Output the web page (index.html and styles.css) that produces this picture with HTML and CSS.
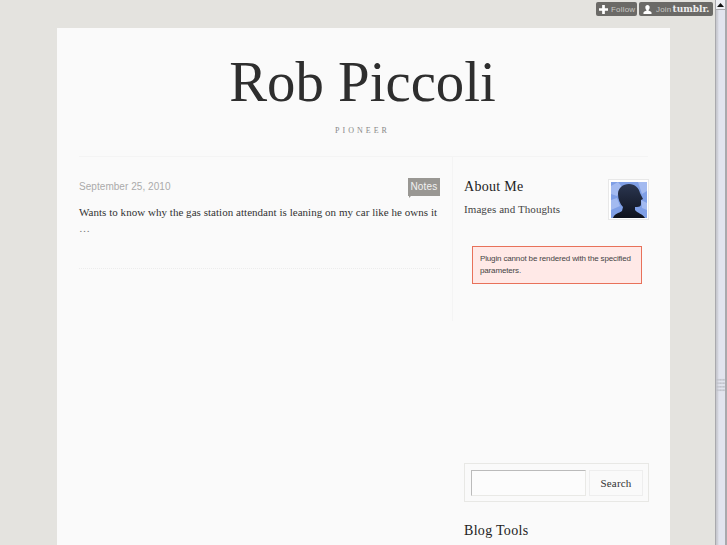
FILE: index.html
```html
<!DOCTYPE html>
<html lang="en">
<head>
<meta charset="utf-8">
<title>Rob Piccoli</title>
<link rel="stylesheet" href="styles.css">
</head>
<body>
<div class="viewport">
  <div class="page">
    <div class="controls">
      <a class="ctl ctl-follow">
        <svg class="ctl-icon" viewBox="0 0 10 10"><path d="M3.500 0h3v3.500H10v3H6.500V10h-3V6.500H0v-3h3.500z"/></svg>
        <span>Follow</span>
      </a>
      <a class="ctl ctl-join">
        <svg class="ctl-icon" viewBox="0 0 10 10"><path d="M5 0c1.500 0 2.400 1 2.400 2.600C7.400 4.200 6.800 5.200 6.200 5.600v.7c1.500.4 3.300 1 3.300 2.200V10H.5V8.500c0-1.200 1.800-1.800 3.300-2.200v-.7C3.200 5.200 2.600 4.200 2.600 2.600 2.600 1 3.500 0 5 0z"/></svg>
        <span>Join</span><b class="ctl-brand">tumblr.</b>
      </a>
    </div>
    <div class="card">
      <header class="head">
        <h1 class="title">Rob Piccoli</h1>
        <p class="tagline">PIONEER</p>
      </header>
      <div class="cols">
        <main class="posts">
          <article class="post">
            <div class="post-meta">
              <span class="date">September 25, 2010</span>
              <a class="notes">Notes</a>
            </div>
            <p class="post-text">Wants to know why the gas station attendant is leaning on my car like he owns it</p>
            <p class="ellipsis">…</p>
          </article>
        </main>
        <aside class="side">
          <div class="about">
            <div class="about-text">
              <h2 class="side-title">About Me</h2>
              <p class="about-sub">Images and Thoughts</p>
            </div>
            <div class="avatar">
              <svg viewBox="0 0 36 36" width="36" height="36">
                <defs>
                  <linearGradient id="sil" x1="0" y1="0" x2="0" y2="1">
                    <stop offset="0" stop-color="#2b3650"/>
                    <stop offset="1" stop-color="#0e121d"/>
                  </linearGradient>
                </defs>
                <rect width="36" height="36" fill="#7f9fe6"/>
                <path d="M0 4l7-4 5 6-6 8-6-2zM0 18l6-2 3 8-9 4zM27 0h9v9l-5 3zM30 18l6 3v7l-5-2z" fill="#a3baf0"/>
                <path d="M2 36C3 32 8 31 11 29L12 25C9 22 7 17 7 12C7 6 12 2 18 2C24 2 28 6 29 11L32 17L30 18L30 22C30 25 27 25 24 25L24 28C26 31 32 32 34 36Z" fill="url(#sil)"/>
              </svg>
            </div>
          </div>
          <div class="plugin-error">Plugin cannot be rendered with the specified parameters.</div>
          <form class="search">
            <input class="search-input" type="text" aria-label="Search">
            <button class="search-btn" type="button">Search</button>
          </form>
          <h2 class="side-title tools">Blog Tools</h2>
        </aside>
      </div>
    </div>
  </div>
  <div class="scrollbar">
    <div class="sb-btn"><svg viewBox="0 0 7 4" width="7" height="4"><path d="M3.500 0L7 4H0z"/></svg></div>
    <div class="sb-track"><span class="sb-grip"></span></div>
  </div>
</div>
</body>
</html>
```
FILE: styles.css
```css
* { box-sizing: border-box; }
html, body { margin: 0; height: 100%; overflow: hidden; }
body { background: #e4e3df; font-family: "Liberation Serif", serif; color: #333; }
.viewport { display: flex; height: 545px; }
.page { position: relative; flex: 1; min-width: 0; padding: 28px 45px 0 57px; overflow: hidden; }
.card { background: #fafafa; height: 1000px; padding: 0 21px 0 22px; }

.controls { position: absolute; top: 2px; right: 2px; display: flex; gap: 2px; }
.ctl { display: flex; align-items: center; height: 14px; padding: 0 3px; background: #6b6a67; color: #c9c8c4; border-radius: 2px; font: 8px "Liberation Sans", sans-serif; letter-spacing: .2px; }
.ctl-follow { width: 41px; }
.ctl-join { width: 74px; }
.ctl-icon { flex: none; width: 9px; height: 9px; fill: #fff; margin-right: 3px; }
.ctl-join .ctl-icon { margin: 0 4px 0 1px; }
.ctl-brand { font: bold 9px "DejaVu Serif", serif; color: #eee; margin-left: 1px; letter-spacing: 0; }

.head { height: 129px; margin-right: 1px; border-bottom: 1px solid #f4f4f4; text-align: center; padding: 22px 2px 0 0; }
.title { margin: 0; font-size: 56.800px; line-height: 64px; font-weight: normal; color: #2e2e2e; }
.tagline { margin: 12px 0 0; font-size: 8px; line-height: 10px; letter-spacing: 3px; color: #888; }

.cols { display: flex; }
.posts { width: 374px; height: 164px; border-right: 1px solid #f4f4f4; padding: 21px 12px 0 0; }
.post { height: 91px; border-bottom: 1px dotted #ececec; }
.post-meta { display: flex; justify-content: space-between; align-items: center; height: 18px; }
.date { font: 10px/18px "Liberation Sans", sans-serif; letter-spacing: .05px; color: #aaa; }
.notes { position: relative; width: 32px; height: 18px; text-align: center; background: #999793; color: #f2f2f2; font: 10px/17px "Liberation Sans", sans-serif; letter-spacing: .2px; }
.notes::after { content: ""; position: absolute; left: 1px; top: 18px; border-left: 2px solid #999793; border-bottom: 2px solid transparent; }
.post-text { margin: 8px 0 0; font-size: 11px; line-height: 17px; letter-spacing: .035px; color: #333; white-space: nowrap; }
.ellipsis { margin: -1px 0 0; font-size: 11px; line-height: 17px; color: #777; letter-spacing: 1px; }

.side { width: 196px; padding: 22px 0 0 11px; }
.about { display: flex; justify-content: space-between; height: 42px; }
.side-title { margin: 0; font-size: 14px; line-height: 16px; font-weight: normal; color: #222; letter-spacing: .3px; }
.about-sub { margin: 7px 0 0; font-size: 11px; line-height: 14px; letter-spacing: .09px; color: #444; }
.avatar { width: 41px; height: 41px; padding: 2px; border: 1px solid #e8e8e8; background: #fff; }
.avatar svg { display: block; }

.plugin-error { margin: 25px 7px 0 8px; height: 38px; padding: 6px 7px 0; border: 1px solid #e8715a; background: #ffe9e7; font: 8px/12px "Liberation Sans", sans-serif; letter-spacing: -.15px; color: #444; }

.search { display: flex; justify-content: space-between; height: 39px; margin-top: 179px; padding: 6px 5px 5px 6px; border: 1px solid #e8e8e5; }
.search-input { width: 115px; height: 26px; border: 1px solid #e9e9e6; border-top-color: #bbb; border-left-color: #bbb; background: #fcfcfc; padding: 0; }
.search-btn { width: 54px; height: 26px; border: 1px solid #eee; background: #fafafa; font: 11px "Liberation Serif", serif; color: #333; padding: 0; letter-spacing: .2px; }
.tools { margin-top: 21px; }

.scrollbar { width: 12px; height: 545px; display: flex; flex-direction: column; border-left: 1px solid #a9a9ad; border-right: 2px solid #a9a9ad; background: linear-gradient(90deg, #c8c9d0 0 1px, #e2e4ee 3px); }
.sb-btn { height: 10px; flex: none; display: flex; align-items: center; justify-content: center; background: #eeeff4; border-bottom: 1px solid #a9a9ad; }
.sb-btn svg { fill: #111; }
.sb-track { flex: 1; display: flex; justify-content: center; padding-top: 368px; }
.sb-grip { width: 9px; height: 14px; background-image: radial-gradient(circle, #c2c4cc 45%, transparent 55%); background-size: 3px 3.500px; }
```
